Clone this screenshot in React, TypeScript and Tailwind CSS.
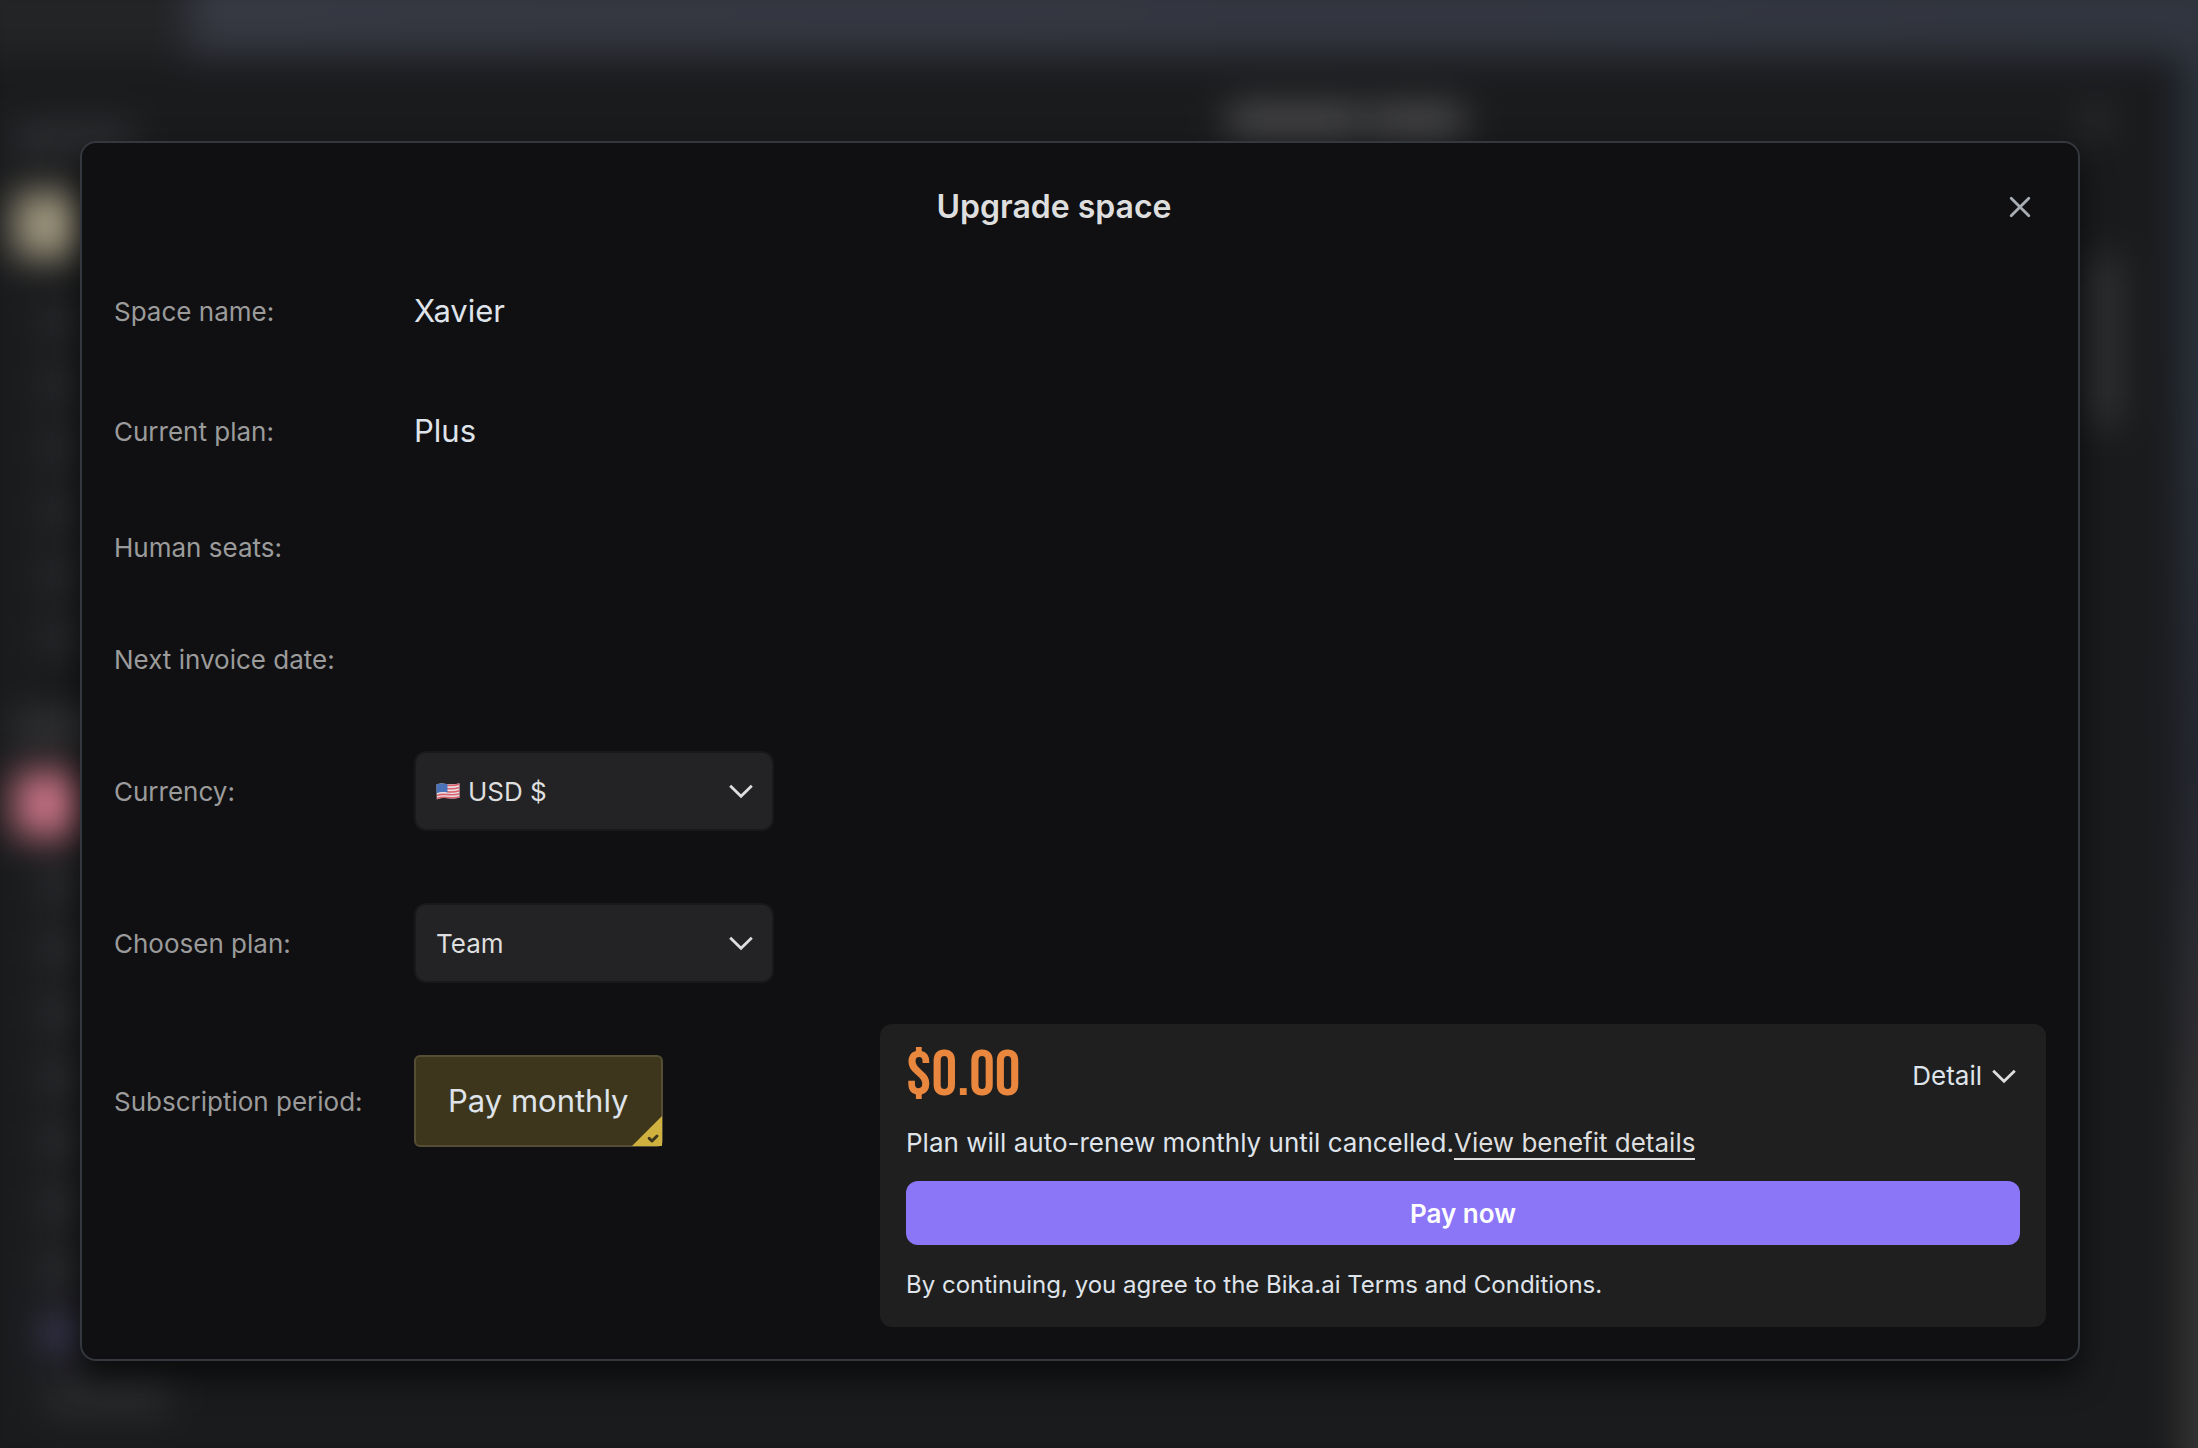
import { useState, type ReactNode } from 'react';

const CURRENCIES = ['USD $', 'EUR €', 'CNY ¥'];
const PLANS = ['Plus', 'Pro', 'Team', 'Business'];

const TOP_ITEMS = ['a', 'b', 'c', 'd', 'e', 'f'];
const BOTTOM_ITEMS = ['a', 'b', 'c', 'd', 'e', 'f', 'g'];

function ChevronIcon() {
  return (
    <svg width="28" height="28" viewBox="0 0 28 28" fill="none" aria-hidden="true" className="shrink-0">
      <path d="M3.2 8.8 14 19.2 24.8 8.8" stroke="#dedede" strokeWidth="2.8" />
    </svg>
  );
}

function FlagIcon() {
  return (
    <svg width="24" height="24" viewBox="0 0 24 24" aria-hidden="true">
      <path d="M.5 5.5C5 3.5 8 4.8 12 5.2S20 5 23.5 4.2V18.5C19 20 16 19.5 12 19.2S5 18.5 .8 20.5Z" fill="#e9dfe3" />
      <path
        d="M1 19.6C5 17.8 8 18.2 12 18.5S20 19 23.5 17.8M1 16.4C5 14.8 8 15.3 12 15.6S20 16 23.5 14.7M11 12.7C16 13.3 20 12.8 23.5 11.7M11 9.5C16 10.2 20 9.7 23.5 8.6M11 6.2C16 6.8 20 6.3 23.5 5.3"
        fill="none"
        stroke="#d9606c"
        strokeWidth="1.6"
      />
      <path d="M.5 5.5C4 4 7 4.3 11.5 5.2V13.4C7 12.9 4 13 .7 14.3Z" fill="#4a72b8" />
    </svg>
  );
}

function SelectBox({
  id,
  value,
  options,
  icon,
  onChange,
}: {
  id: string;
  value: string;
  options: string[];
  icon?: ReactNode;
  onChange: (value: string) => void;
}) {
  return (
    <div className="relative flex w-[360px] items-center">
      {icon && <span className="pointer-events-none absolute left-[22px]">{icon}</span>}
      <select
        id={id}
        value={value}
        onChange={(e) => onChange(e.target.value)}
        className={`h-20 w-full appearance-none rounded-xl border-2 border-[#18191b] bg-[#232325] pr-14 text-[26px] text-[#dedede] outline-none ${
          icon ? 'pl-[52px]' : 'pl-5'
        }`}
      >
        {options.map((o) => (
          <option key={o}>{o}</option>
        ))}
      </select>
      <span className="pointer-events-none absolute right-[19px]">
        <ChevronIcon />
      </span>
    </div>
  );
}

function Row({ label, htmlFor, className, children }: { label: string; htmlFor?: string; className: string; children?: ReactNode }) {
  return (
    <div className={`flex items-center ${className}`}>
      <label htmlFor={htmlFor} className="w-[300px] shrink-0 text-[26px] text-[#9b9b9b]">
        {label}
      </label>
      {children}
    </div>
  );
}

/** Workspace behind the dialog. It overhangs the window by 32px so the blur never fades at the edges. */
function Backdrop() {
  return (
    <div aria-hidden="true" className="absolute inset-0 overflow-hidden bg-[#1a1b1d]">
      <div className="absolute -inset-8 flex flex-col bg-[#1a1b1d] blur-[18px]">
        <div className="flex h-[88px] shrink-0">
          <div className="w-[220px] bg-[#222426]" />
          <div className="flex-1 bg-linear-to-r from-[#363842] to-[#31353f]" />
        </div>
        <div className="flex min-h-0 flex-1">
          <div className="flex w-[582px] shrink-0 flex-col pl-8">
            <div className="mt-[68px] ml-3.5 h-7 w-[120px] shrink-0 bg-[#303134]" />
            <div className="mt-10 ml-3.5 h-[66px] w-[66px] shrink-0 rounded-lg bg-[#a0987f]" />
            <div className="mt-12 ml-11 flex flex-col gap-[31px]">
              {TOP_ITEMS.map((k) => (
                <div key={k} className="h-8 w-8 bg-[#2e2f32]" />
              ))}
            </div>
            <div className="mt-[62px] ml-3.5 h-6 w-[100px] shrink-0 bg-[#3a3b3c]" />
            <div className="mt-8 ml-3.5 h-[66px] w-[66px] shrink-0 rounded-lg bg-[#c67283]" />
            <div className="mt-8 ml-11 flex flex-col gap-8">
              {BOTTOM_ITEMS.map((k) => (
                <div key={k} className="h-8 w-8 shrink-0 bg-[#333437]" />
              ))}
              <div className="h-8 w-8 shrink-0 bg-[#48446a]" />
              <div className="h-8 w-[125px] shrink-0 bg-[#2c2d2f]" />
            </div>
          </div>
          <div className="flex flex-1 flex-col border-l border-[#24262a]">
            <div className="flex items-center pt-12 pr-[76px]">
              <div className="flex flex-1 justify-center gap-2 pl-[54px]">
                <div className="h-8 w-[134px] bg-[#4c4c4e]" />
                <div className="h-8 w-[94px] bg-[#4c4c4e]" />
              </div>
              <div className="h-6 w-5 bg-[#38393b]" />
            </div>
            <div className="mt-[120px] mr-[64px] h-[170px] w-7 self-end bg-[#353638]" />
          </div>
          <div className="w-12 shrink-0 bg-linear-to-b from-[#2d3540] from-20% via-[#282a35] via-50% to-[#393737] to-80%" />
        </div>
      </div>
    </div>
  );
}

export default function App() {
  const [currency, setCurrency] = useState('USD $');
  const [plan, setPlan] = useState('Team');

  return (
    <div className="relative flex min-h-screen flex-col pt-[141px] pr-[118px] pb-[87px] pl-20 font-['Inter',sans-serif] text-[#dfe3ea]">
      <Backdrop />
      <main
        role="dialog"
        aria-labelledby="dialog-title"
        className="relative flex flex-1 flex-col rounded-2xl border-2 border-[#34373e] bg-[#101012] p-8 shadow-[0_16px_32px_rgba(0,0,0,0.6)]"
      >
        <header className="flex h-16 items-center">
          <h1 id="dialog-title" className="flex-1 text-center text-[32px] font-semibold text-[#dedede]">
            Upgrade space
          </h1>
          <button type="button" aria-label="Close" className="flex w-[52px] justify-center">
            <svg width="24" height="24" viewBox="0 0 24 24" fill="none" aria-hidden="true">
              <path d="M3.2 3.2 20.8 20.8M20.8 3.2 3.2 20.8" stroke="#a9adb4" strokeWidth="2.8" strokeLinecap="round" />
            </svg>
          </button>
        </header>

        <div className="flex flex-1">
          <form className="flex flex-1 flex-col pt-3">
            <Row label="Space name:" className="h-[120px]">
              <span className="text-[31px]">Xavier</span>
            </Row>
            <Row label="Current plan:" className="h-[120px]">
              <span className="text-[31px]">Plus</span>
            </Row>
            <Row label="Human seats:" className="h-28" />
            <Row label="Next invoice date:" className="h-28" />
            <Row label="Currency:" htmlFor="currency" className="h-[152px]">
              <SelectBox id="currency" value={currency} options={CURRENCIES} icon={<FlagIcon />} onChange={setCurrency} />
            </Row>
            <Row label="Choosen plan:" htmlFor="plan" className="h-[152px]">
              <SelectBox id="plan" value={plan} options={PLANS} onChange={setPlan} />
            </Row>
            <Row label="Subscription period:" htmlFor="period" className="h-[164px]">
              <button
                id="period"
                type="button"
                className="relative h-[92px] rounded-md border-2 border-[#554e35] bg-[#3d361c] px-8 text-[31px]"
              >
                Pay monthly
                <svg width="30" height="30" viewBox="0 0 30 30" className="absolute -right-px -bottom-px" aria-hidden="true">
                  <path d="M30 0V30H0Z" fill="#cfb13f" />
                  <path d="M17.2 22.3 20 25 25 20" fill="none" stroke="#3d361c" strokeWidth="3" strokeLinecap="round" strokeLinejoin="round" />
                </svg>
              </button>
            </Row>
          </form>

          <section className="flex w-[1166px] flex-col self-end rounded-xl bg-[#1f1f1f] px-[26px] pt-4 pb-6">
            <div className="flex h-[71px] items-center justify-between">
              <strong className="font-['Bebas_Neue','Roboto_Condensed',sans-serif] text-[64px] leading-[60px] font-normal text-[#ea873e]">
                $0.00
              </strong>
              <button type="button" className="flex items-center gap-2 pr-0.5 text-[26px]">
                Detail
                <ChevronIcon />
              </button>
            </div>
            <p className="mt-3.5 text-[26px] leading-9">
              Plan will auto-renew monthly until cancelled.
              <a href="#benefits" className="border-b-2 border-[#dedede] text-[#dedede]">
                View benefit details
              </a>
            </p>
            <button type="button" className="mt-5 h-16 rounded-xl bg-[#8b76f7] text-[26px] font-semibold text-white">
              Pay now
            </button>
            <p className="mt-[22px] text-[24px] leading-9">By continuing, you agree to the Bika.ai Terms and Conditions.</p>
          </section>
        </div>
      </main>
    </div>
  );
}
